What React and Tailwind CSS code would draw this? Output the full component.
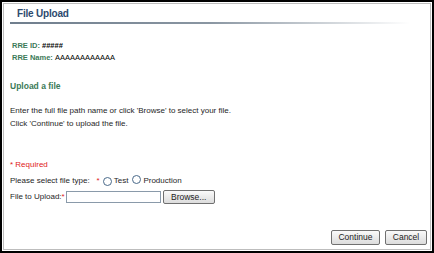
import React from "react";

const Radio = () => (
  <span className="inline-block w-[9px] h-[9px] rounded-full border border-[#4a6a8a] bg-white shrink-0" />
);

export default function App() {
  return (
    <div className="w-[434px] h-[253px] border-2 border-black bg-white p-px" style={{ fontFamily: '"Liberation Sans", Arial, sans-serif' }}>
      <div className="h-full border border-[#bdbdbd] flex flex-col relative">
        <div className="pt-[4px] pl-[13px] text-[10px] leading-[12px] font-bold text-[#2c4a6e] tracking-[-0.2px]">
          File Upload
        </div>
        <div className="ml-[6px] mr-[20px] mt-[2px] h-[2px] bg-gradient-to-r from-[#6f7e8d] via-[#8a96a2] to-transparent" />

        <div className="pl-[8px] mt-[17px] flex flex-col gap-[2px] text-[7.5px] leading-[10px]">
          <div className="text-[#3b7a57] font-bold">
            RRE ID: <span className="text-black">#####</span>
          </div>
          <div className="text-[#3b7a57] font-bold">
            RRE Name: <span className="text-black font-normal">AAAAAAAAAAAA</span>
          </div>
        </div>

        <div className="pl-[6px] mt-[18px] text-[8.5px] leading-[11px] font-bold text-[#3b7a57]">
          Upload a file
        </div>

        <div className="pl-[6px] mt-[14px] flex flex-col gap-[3px] text-[8px] leading-[10px] text-[#1e1e1e]">
          <div>Enter the full file path name or click 'Browse' to select your file.</div>
          <div>Click 'Continue' to upload the file.</div>
        </div>

        <div className="pl-[6px] mt-[31px] text-[8px] leading-[10px] text-[#e0201a]">* Required</div>

        <div className="pl-[6px] mt-[5px] flex items-center text-[8px] leading-[10px] text-[#1e1e1e]">
          <span>Please select file type:</span>
          <span className="text-[#e0201a] ml-[7px] mr-[3px]">*</span>
          <Radio />
          <span className="ml-[2px]">Test</span>
          <span className="ml-[4px]"><Radio /></span>
          <span className="ml-[2px]">Production</span>
        </div>

        <div className="pl-[6px] mt-[3px] flex items-center text-[8px] leading-[10px] text-[#1e1e1e]">
          <span>File to Upload:</span>
          <span className="text-[#e0201a]">*</span>
          <span className="ml-[1px] w-[95px] h-[12px] border border-[#8a9aaa] bg-white" />
          <span className="ml-[2px] w-[52px] h-[14px] border border-[#707070] rounded-[2px] bg-gradient-to-b from-[#fafafa] to-[#dcdcdc] flex items-center justify-center text-[8.5px] text-[#222]">
            Browse...
          </span>
        </div>

        <div className="mt-auto mb-[4px] mr-[3px] flex justify-end gap-[5px]">
          <span className="w-[49px] h-[15px] border border-[#707070] rounded-[2px] bg-gradient-to-b from-[#fafafa] to-[#dcdcdc] flex items-center justify-center text-[8.5px] text-[#222]">
            Continue
          </span>
          <span className="w-[42px] h-[15px] border border-[#707070] rounded-[2px] bg-gradient-to-b from-[#fafafa] to-[#dcdcdc] flex items-center justify-center text-[8.5px] text-[#222]">
            Cancel
          </span>
        </div>
      </div>
    </div>
  );
}
